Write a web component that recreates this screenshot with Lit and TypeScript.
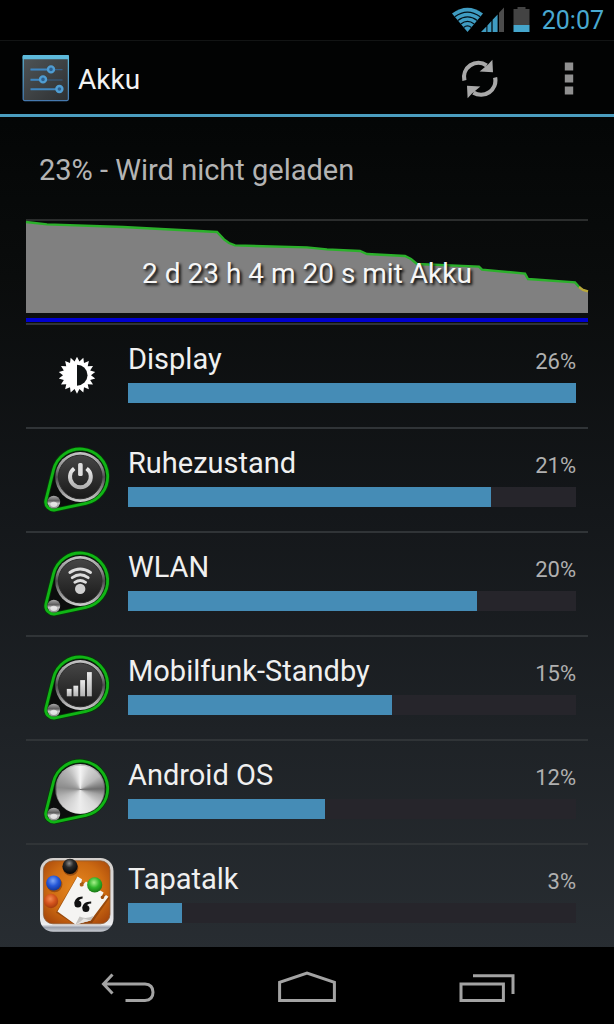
import { LitElement, html, css, svg, TemplateResult } from "lit";
import { customElement, property } from "lit/decorators.js";

type IconName = "display" | "power" | "wifi" | "signal" | "knob" | "tapatalk";

interface Usage {
  icon: IconName;
  name: string;
  percent: number;
  level: number;
}

const USAGE: Usage[] = [
  { icon: "display", name: "Display", percent: 26, level: 100 },
  { icon: "power", name: "Ruhezustand", percent: 21, level: 81 },
  { icon: "wifi", name: "WLAN", percent: 20, level: 78 },
  { icon: "signal", name: "Mobilfunk-Standby", percent: 15, level: 59 },
  { icon: "knob", name: "Android OS", percent: 12, level: 44 },
  { icon: "tapatalk", name: "Tapatalk", percent: 3, level: 12 },
];

/* Eighteen-toothed sun outline around the display icon's centre. */
const SUN = Array.from({ length: 36 }, (_, i) => {
  const r = i % 2 ? 14 : 18.5;
  const a = (i * Math.PI) / 18 - Math.PI / 2;
  return `${(37 + r * Math.cos(a)).toFixed(2)},${(36.2 + r * Math.sin(a)).toFixed(2)}`;
}).join(" ");

@customElement("usage-icon")
export class UsageIcon extends LitElement {
  static styles = css`
    :host {
      display: block;
    }
    .art {
      display: block;
      width: 74px;
      height: 74px;
      overflow: visible;
    }
    .steel {
      width: 48px;
      height: 48px;
      border-radius: 50%;
      background: conic-gradient(
        #f4f4f4 0deg,
        #d2d2d2 25deg,
        #b9b9b9 55deg,
        #6d6d6d 88deg,
        #a4a4a4 105deg,
        #d8d8d8 135deg,
        #ededed 180deg,
        #cfcfcf 225deg,
        #b4b4b4 250deg,
        #8b8b8b 275deg,
        #9c9c9c 295deg,
        #b6b6b6 325deg,
        #f4f4f4 360deg
      );
    }
  `;

  @property() name: IconName = "display";

  private pin(symbol: TemplateResult) {
    return svg`
      <defs>
        <linearGradient id="ring" x1="0" y1="0" x2="0" y2="1">
          <stop offset="0" stop-color="#c6c6c6" />
          <stop offset=".3" stop-color="#8d8d8d" />
          <stop offset=".5" stop-color="#4c4c4c" />
          <stop offset=".75" stop-color="#909090" />
          <stop offset="1" stop-color="#d0d0d0" />
        </linearGradient>
        <linearGradient id="face" x1="0" y1="0" x2="0" y2="1">
          <stop offset="0" stop-color="#454545" />
          <stop offset="1" stop-color="#191919" />
        </linearGradient>
        <linearGradient id="glyph" x1="0" y1="0" x2="0" y2="1">
          <stop offset="0" stop-color="#eaeaea" />
          <stop offset="1" stop-color="#b2b2b2" />
        </linearGradient>
        <linearGradient id="ball" x1="0" y1="0" x2="0" y2="1">
          <stop offset="0" stop-color="#a9a9a9" />
          <stop offset=".4" stop-color="#5b5b5b" />
          <stop offset=".6" stop-color="#c5c5c5" />
          <stop offset="1" stop-color="#888" />
        </linearGradient>
      </defs>
      <g transform="translate(.2 .5)">
        <path d="M13.3 26.3A27.5 27.5 0 1 1 45.7 59.9L15.1 66.3A8 8 0 0 1 5.7 56.6Z"
          fill="#0b0d0c" stroke="#063c08" stroke-width="4.4" />
        <path d="M13.3 26.3A27.5 27.5 0 1 1 45.7 59.9L15.1 66.3A8 8 0 0 1 5.7 56.6Z"
          fill="none" stroke="#10b515" stroke-width="2.8" />
        <circle cx="13.6" cy="58.6" r="6.4" fill="url(#ball)" />
        <ellipse cx="13.6" cy="60.8" rx="3.4" ry="2.6" fill="#f2f2f2" opacity=".75" />
        ${symbol}
      </g>
    `;
  }

  private dial(glyph: TemplateResult) {
    return this.pin(svg`
      <circle cx="40" cy="33.5" r="25" fill="url(#ring)" />
      <circle cx="40" cy="33.5" r="21.8" fill="url(#face)" stroke="#2c2c2c" stroke-width="1" />
      ${glyph}
    `);
  }

  private art() {
    switch (this.name) {
      case "display":
        return svg`
          <polygon points=${SUN} fill="#fff" />
          <path d="M37 25.7A10.5 10.5 0 0 1 37 46.7Z" fill="#0f1314" />
        `;
      case "power":
        return this.dial(svg`
          <path d="M34 25A10.4 10.4 0 1 0 46.4 25" fill="none" stroke="url(#glyph)" stroke-width="4" />
          <rect x="37.9" y="19.6" width="4.6" height="13" rx="1.6" fill="#dedede" />
        `);
      case "wifi":
        return this.dial(svg`
          <g fill="none" stroke="#dcdcdc" stroke-width="2.8" stroke-linecap="round">
            <path d="M29.6 25Q40 18 50.4 25" />
            <path d="M32 30.2Q40 24.4 48 30.2" />
            <path d="M34.6 34.8Q40 31.2 45.4 34.8" />
          </g>
          <circle cx="40" cy="41.4" r="5.2" fill="#cfcfcf" />
        `);
      case "signal":
        return this.dial(svg`
          <g fill="url(#glyph)">
            <rect x="26.6" y="37.4" width="4.8" height="7.4" />
            <rect x="33.2" y="34.2" width="4.8" height="10.6" />
            <rect x="40" y="28.6" width="4.8" height="16.2" />
            <rect x="46.8" y="20.6" width="4.8" height="24.2" />
          </g>
        `);
      case "knob":
        return this.pin(svg`
          <circle cx="40" cy="33.5" r="25" fill="url(#ring)" />
          <foreignObject x="16" y="9.5" width="48" height="48"><div class="steel"></div></foreignObject>
        `);
      default:
        return svg`
          <defs>
            <linearGradient id="frame" x1="0" y1="0" x2="0" y2="1">
              <stop offset="0" stop-color="#d3cfcc" />
              <stop offset=".85" stop-color="#e6e6e8" />
              <stop offset=".9" stop-color="#f0f0f2" />
              <stop offset=".94" stop-color="#9aa0ac" />
              <stop offset="1" stop-color="#c9ccd2" />
            </linearGradient>
            <radialGradient id="cork" cx=".5" cy=".45" r=".7">
              <stop offset="0" stop-color="#e8891f" />
              <stop offset=".6" stop-color="#cc6a12" />
              <stop offset="1" stop-color="#a3430a" />
            </radialGradient>
            <radialGradient id="black" cx=".45" cy=".3" r=".7">
              <stop offset="0" stop-color="#8c8c8c" /><stop offset=".4" stop-color="#2a2a2a" /><stop offset="1" stop-color="#050505" />
            </radialGradient>
            <radialGradient id="blue" cx=".45" cy=".35" r=".7">
              <stop offset="0" stop-color="#7fa6f5" /><stop offset=".5" stop-color="#2457d8" /><stop offset="1" stop-color="#12318c" />
            </radialGradient>
            <radialGradient id="green" cx=".45" cy=".35" r=".7">
              <stop offset="0" stop-color="#a7f08b" /><stop offset=".5" stop-color="#2eb52a" /><stop offset="1" stop-color="#177012" />
            </radialGradient>
            <radialGradient id="red" cx=".45" cy=".35" r=".7">
              <stop offset="0" stop-color="#f28a52" /><stop offset=".5" stop-color="#d4531c" /><stop offset="1" stop-color="#9c370c" />
            </radialGradient>
          </defs>
          <g transform="translate(0 -1)">
            <rect x="0" y="0" width="73.5" height="73.8" rx="13" fill="url(#frame)" />
            <rect x="3.4" y="2.8" width="66.6" height="63" rx="9.5" fill="url(#cork)" stroke="#8a5a35" stroke-width=".8" />
            <circle cx="30.6" cy="10" r="7.8" fill="#5b2505" opacity=".5" />
            <circle cx="30" cy="8.4" r="7.6" fill="url(#black)" />
            <circle cx="14.6" cy="26.4" r="7.8" fill="#5b2505" opacity=".45" />
            <circle cx="13.7" cy="25" r="7.6" fill="url(#blue)" />
            <circle cx="11" cy="43" r="7.2" fill="url(#red)" />
            <path d="M36 20L16 54.5L34 66L52 65L69.5 40Z" fill="#5b2505" opacity=".4" />
            <path d="M37.5 18.4L42 21.2L41.4 24.6A2 2 0 1 0 43.6 26L46 23.6L50.4 26.4L56 34L59.4 32L63.6 34.6L62.2 37.4A1.8 1.8 0 1 0 64.2 38.8L66 37L68.4 38.8L50.6 62.6L35.4 66.4L17.5 53.6Z" fill="#f5f4f2" />
            <path d="M35.4 66.4L39.6 58.6Q46 61.6 54.2 57.8L50.6 62.6Z" fill="#c4c2bf" />
            <path d="M35.4 66.4Q41.5 63.6 43.6 60.6L50.6 62.6Z" fill="#e6e4e2" />
            <circle cx="54.7" cy="26.8" r="7.6" fill="url(#green)" />
            <g fill="#111">
              <circle cx="37.9" cy="46" r="3.5" />
              <path d="M34.4 45.6C34.4 41.4 37.6 38.6 42.6 38.6L42.6 40.4C39.8 40.8 38.4 42.2 38.6 44.6Z" />
              <circle cx="45.9" cy="50.6" r="3.5" />
              <path d="M42.4 50.2C42.4 46.2 45.8 43.4 51.2 43.6L51.2 45.4C48.2 45.6 46.4 46.8 46.6 49.2Z" />
            </g>
          </g>
        `;
    }
  }

  render() {
    return html`<svg class="art" viewBox="0 0 74 74" aria-hidden="true">${this.art()}</svg>`;
  }
}

@customElement("status-bar")
export class StatusBar extends LitElement {
  static styles = css`
    :host {
      display: flex;
      justify-content: flex-end;
      align-items: center;
      height: 40px;
      padding-right: 10px;
      background: #000;
    }
    .icons {
      display: block;
      width: 78px;
      height: 26px;
      margin-right: 12px;
    }
    .clock {
      font-size: 25px;
      line-height: 30px;
      padding-top: 2px;
      color: #49a9d0;
    }
  `;

  render() {
    return html`
      <svg class="icons" viewBox="0 0 78 26" aria-hidden="true">
        <path d="M0 6.4Q15.5 -5 31 6.4L15.5 25Z" fill="#3f9cc2" />
        <g fill="none" stroke="#04121a" stroke-width="1.3">
          <path d="M2.8 9.8Q15.5 .4 28.2 9.8" />
          <path d="M5.8 13.4Q15.5 6.2 25.2 13.4" />
          <path d="M8.8 17Q15.5 11.8 22.2 17" />
          <path d="M11.6 20.4Q15.5 17.4 19.4 20.4" />
        </g>
        <path d="M29 25L34.4 19.6V25ZM35.4 25V18.4L39.4 14V25ZM40.6 25V12.8L45.6 7.4V25Z" fill="#3f9cc2" />
        <path d="M47 25V5.8L52 .6V25Z" fill="#4b4b4b" />
        <path d="M61.5 2H65.5V0H73.5V2H77.5V18H61.5Z" fill="#434343" />
        <path d="M61.5 18H77.5V25H61.5Z" fill="#45a6cc" />
      </svg>
      <time class="clock">20:07</time>
    `;
  }
}

@customElement("action-bar")
export class ActionBar extends LitElement {
  static styles = css`
    :host {
      display: flex;
      align-items: center;
      box-sizing: border-box;
      height: 77px;
      padding-left: 22px;
      border-top: 1px solid #121414;
      border-bottom: 3px solid #4b9dbf;
      background: #020303;
    }
    .logo {
      display: block;
      width: 48px;
      height: 48px;
      margin-right: 8px;
    }
    .title {
      flex: 1;
      margin: 0;
      padding-top: 4px;
      font-size: 28px;
      line-height: 34px;
      font-weight: 400;
      color: #f3f3f3;
    }
    .action {
      display: grid;
      place-items: center;
      width: 90px;
      height: 73px;
      padding: 2px 0 0;
      border: 0;
      background: none;
    }
    .glyph {
      display: block;
      width: 38px;
      height: 40px;
    }
  `;

  render() {
    return html`
      <svg class="logo" viewBox="0 0 48 48" aria-hidden="true">
        <defs>
          <linearGradient id="panel" x1="0" y1="0" x2="1" y2="1">
            <stop offset="0" stop-color="#4f5557" />
            <stop offset="1" stop-color="#2e3032" />
          </linearGradient>
          <linearGradient id="edge" x1="0" y1="0" x2="0" y2="1">
            <stop offset="0" stop-color="#5cb6d8" />
            <stop offset="1" stop-color="#4679ae" />
          </linearGradient>
        </defs>
        <rect x="1.2" y="1.6" width="45.2" height="45" rx="1.5" fill="url(#panel)" stroke="url(#edge)" stroke-width="1.3" />
        <rect x=".6" y="1" width="46.4" height="4.2" rx="1" fill="#5db9da" />
        <path d="M8.5 15.6H40.5M8.5 26H40.5" stroke="#34608a" stroke-width="1.2" />
        <path d="M8.5 15.6H28M8.5 25.8H20M8.5 35.2H36" stroke="#3f86c0" stroke-width="2" />
        <g fill="#2c5f8f" stroke="#4f9dd2" stroke-width="2.4">
          <circle cx="29" cy="15.4" r="3" />
          <circle cx="21" cy="25.4" r="3" />
          <circle cx="37.4" cy="35" r="3" />
        </g>
      </svg>
      <h1 class="title">Akku</h1>
      <button class="action" aria-label="Aktualisieren">
        <svg class="glyph" viewBox="-1 0 38 40" aria-hidden="true">
          <g fill="none" stroke="#a9a9a9" stroke-width="4.2">
            <path d="M3.4 21.5A14.4 14.4 0 0 1 25.6 6.4" />
            <path d="M34.1 18.5A14.4 14.4 0 0 1 12.4 33.6" />
          </g>
          <path d="M31.4 .8L32 13.2L18.6 12.4L23.4 8.4L27 5.4Z" fill="#a9a9a9" />
          <path d="M6.6 39.2L6 26.8L19.4 27.6L14.6 31.6L11 34.6Z" fill="#a9a9a9" />
        </svg>
      </button>
      <button class="action" aria-label="Weitere Optionen">
        <svg class="glyph" viewBox="0 0 38 40" aria-hidden="true">
          <path d="M14.8 3.4H23.2V11.4H14.8ZM14.8 15.4H23.2V23.4H14.8ZM14.8 27.4H23.2V35.4H14.8Z" fill="#909090" />
        </svg>
      </button>
    `;
  }
}

@customElement("battery-history")
export class BatteryHistory extends LitElement {
  static styles = css`
    :host {
      display: grid;
      align-items: center;
      height: 102px;
      border-top: 2px solid #2b2d2d;
    }
    .chart,
    .elapsed {
      grid-area: 1 / 1;
    }
    .chart {
      display: block;
      width: 100%;
      height: 102px;
      overflow: visible;
    }
    .elapsed {
      margin: 0;
      padding-top: 4px;
      font-size: 28px;
      line-height: 34px;
      text-align: center;
      color: #f6f6f6;
      text-shadow: 2px 2px 3px #000;
    }
  `;

  render() {
    const level =
      "0,1 21,3.4 97,6 191,11 198,18.4 203,22 209,24.4 281,26.4 301,28.4 334,30 341,33 379,35 385,38 391,43 453,45.6 456,48.6 499,52.6 502,58 549,61.4 554,67";
    return html`
      <svg class="chart" viewBox="0 0 562 102" preserveAspectRatio="none" aria-hidden="true">
        <polygon points="0,92 ${level} 562,70 562,92" fill="#808080" />
        <polyline points=${level} fill="none" stroke="#2bb02b" stroke-width="2.4" />
        <path d="M553 66L557 69L562 70.4" fill="none" stroke="#b9a83a" stroke-width="2.4" />
        <rect x="0" y="97" width="562" height="4" fill="#0000cf" />
      </svg>
      <p class="elapsed">2 d 23 h 4 m 20 s mit Akku</p>
    `;
  }
}

@customElement("nav-bar")
export class NavBar extends LitElement {
  static styles = css`
    :host {
      display: flex;
      height: 77px;
      padding: 0 38px;
      background: #000;
    }
    .key {
      flex: 1;
      display: grid;
      place-items: center;
      padding: 2px 0 0;
      border: 0;
      background: none;
    }
    .glyph {
      display: block;
      width: 60px;
      height: 34px;
      fill: none;
      stroke: #a3a3a3;
      stroke-width: 3;
    }
  `;

  render() {
    return html`
      <button class="key" aria-label="Zurück">
        <svg class="glyph" viewBox="0 0 60 34" aria-hidden="true">
          <path d="M14.5 4.5L5.5 14L14.5 23.5M6 14H47Q55 14.5 55 22.2Q55 30 47 30.4H27.5" />
        </svg>
      </button>
      <button class="key" aria-label="Startseite">
        <svg class="glyph" viewBox="0 0 60 34" aria-hidden="true">
          <path d="M2.6 30.5V12.4L30 3L57.4 12.4V30.5Z" />
        </svg>
      </button>
      <button class="key" aria-label="Letzte Apps">
        <svg class="glyph" viewBox="0 0 60 34" aria-hidden="true">
          <path d="M5 14H47.4V30.5H5ZM17 5.8H57V24" />
        </svg>
      </button>
    `;
  }
}

@customElement("app-root")
export class AppRoot extends LitElement {
  static styles = css`
    :host {
      display: flex;
      flex-direction: column;
      height: 100vh;
      overflow: hidden;
      font-family: Roboto, "Noto Sans", sans-serif;
      background: linear-gradient(#000 0, #040606 12%, #0a0c0c 27%, #14171a 50%, #282d32 93%);
    }
    .content {
      flex: 1;
      min-height: 0;
      overflow-y: auto;
      scrollbar-width: none;
      padding: 0 26px;
    }
    .summary {
      margin: 0;
      padding: 36px 13px 32px;
      font-size: 29px;
      line-height: 34px;
      color: #b4b4b4;
    }
    .list {
      margin: 0;
      padding: 0;
      list-style: none;
    }
    .row {
      display: grid;
      grid-template-columns: 74px 1fr;
      column-gap: 14px;
      align-items: center;
      box-sizing: border-box;
      height: 104px;
      padding: 0 12px 0 14px;
      border-top: 2px solid #303437;
    }
    .body {
      display: grid;
      row-gap: 4px;
      padding-bottom: 8px;
    }
    .line {
      display: flex;
      justify-content: space-between;
      align-items: baseline;
      height: 38px;
      line-height: 36px;
    }
    .name {
      font-size: 29px;
      color: #f0f0f0;
    }
    .percent {
      font-size: 22px;
      color: #b0b0b0;
    }
    .bar {
      display: block;
      appearance: none;
      width: 100%;
      height: 20px;
      border: 0;
      background: #26252b;
    }
    .bar::-webkit-progress-bar {
      background: #26252b;
    }
    .bar::-webkit-progress-value {
      background: #458cb6;
    }
  `;

  render() {
    return html`
      <status-bar></status-bar>
      <action-bar></action-bar>
      <main class="content">
        <p class="summary">23% - Wird nicht geladen</p>
        <battery-history></battery-history>
        <ul class="list">
          ${USAGE.map(
            (u, i) => html`
              <li class="row">
                <usage-icon name=${u.icon}></usage-icon>
                <div class="body">
                  <div class="line">
                    <label class="name" for="bar-${i}">${u.name}</label>
                    <span class="percent">${u.percent}%</span>
                  </div>
                  <progress class="bar" id="bar-${i}" max="100" value=${u.level}></progress>
                </div>
              </li>
            `
          )}
        </ul>
      </main>
      <nav-bar></nav-bar>
    `;
  }
}
